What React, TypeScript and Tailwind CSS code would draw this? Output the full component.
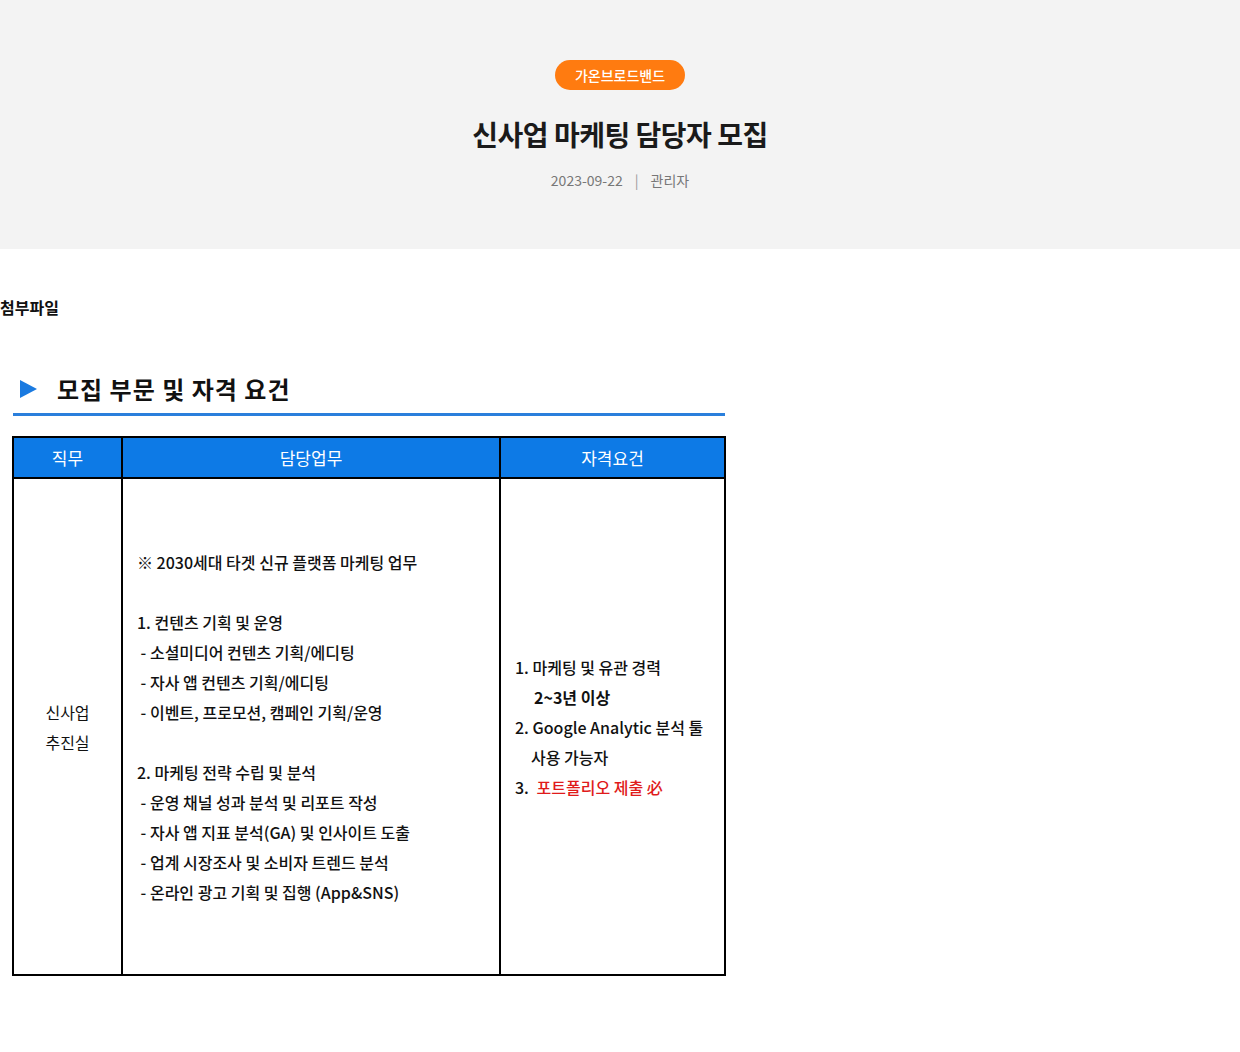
export default function App() {
  const f = { fontFamily: '"Noto Sans CJK KR", "Noto Sans", sans-serif' };
  const left = [
    "※ 2030세대 타겟 신규 플랫폼 마케팅 업무",
    "",
    "1. 컨텐츠 기획 및 운영",
    " - 소셜미디어 컨텐츠 기획/에디팅",
    " - 자사 앱 컨텐츠 기획/에디팅",
    " - 이벤트, 프로모션, 캠페인 기획/운영",
    "",
    "2. 마케팅 전략 수립 및 분석",
    " - 운영 채널 성과 분석 및 리포트 작성",
    " - 자사 앱 지표 분석(GA) 및 인사이트 도출",
    " - 업계 시장조사 및 소비자 트렌드 분석",
    " - 온라인 광고 기획 및 집행 (App&SNS)",
  ];
  return (
    <div className="w-[1240px] min-h-[1052px] bg-white text-[#111]" style={f}>
      <div className="h-[249px] bg-[#f3f3f3] flex flex-col items-center pt-[60px]">
        <div className="h-[30px] px-5 rounded-full bg-[#ff7b10] text-white text-[14px] font-medium flex items-center">가온브로드밴드</div>
        <h1 className="mt-[24px] text-[28px] font-bold leading-[40px] tracking-[-0.5px] text-[#1a1a1a]">신사업 마케팅 담당자 모집</h1>
        <div className="mt-[16px] text-[14px] text-[#777] flex items-center gap-3">
          <span>2023-09-22</span><span className="text-[#999]">|</span><span>관리자</span>
        </div>
      </div>
      <div className="pt-[46px] text-[16px] font-semibold leading-[24px]">첨부파일</div>
      <div className="mt-[52px] pl-[20px] flex items-center h-[36px]">
        <svg width="17" height="18" viewBox="0 0 17 18"><path d="M0 0 L17 9 L0 18 Z" fill="#1a7ae0" /></svg>
        <span className="ml-[20px] text-[24px] font-bold tracking-[1px]">모집 부문 및 자격 요건</span>
      </div>
      <div className="ml-[13px] mt-[6px] w-[712px] h-[3px] bg-[#2a7fdc]" />
      <table className="ml-[12px] mt-[20px] w-[714px] border-collapse border-2 border-black text-[16px]">
        <thead>
          <tr className="h-[41px] bg-[#0d7ae6] text-white text-[17px] font-normal">
            <th className="w-[109px] border-2 border-black font-normal">직무</th>
            <th className="w-[378px] border-2 border-black font-normal">담당업무</th>
            <th className="border-2 border-black font-normal">자격요건</th>
          </tr>
        </thead>
        <tbody>
          <tr className="h-[497px]">
            <td className="border-2 border-black text-center leading-[30px]">신사업<br />추진실</td>
            <td className="border-2 border-black pl-[14px] leading-[30px] font-medium whitespace-pre">
              {left.map((l, i) => <div key={i} className="h-[30px]">{l}</div>)}
            </td>
            <td className="border-2 border-black pl-[14px] leading-[30px] font-medium">
              <div>1. 마케팅 및 유관 경력</div>
              <div className="pl-[19px] font-semibold">2~3년 이상</div>
              <div>2. Google Analytic 분석 툴</div>
              <div className="pl-[16px]">사용 가능자</div>
              <div>3. <span className="ml-1 text-[#e01b1b]">포트폴리오 제출 必</span></div>
            </td>
          </tr>
        </tbody>
      </table>
    </div>
  );
}
